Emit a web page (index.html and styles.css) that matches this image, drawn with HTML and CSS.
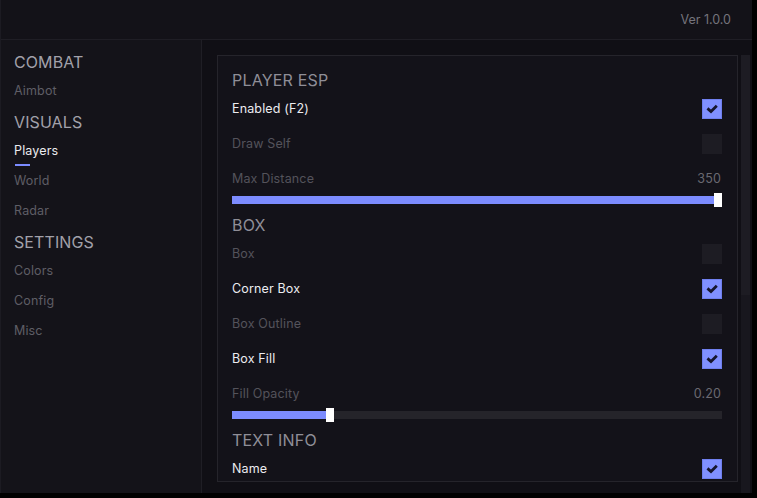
FILE: index.html
```html
<!DOCTYPE html>
<html>
<head>
<meta charset="utf-8">
<link rel="stylesheet" href="styles.css">
</head>
<body>
<div class="window">
  <header class="header"><span class="version">Ver 1.0.0</span></header>
  <div class="main">
    <nav class="sidebar">
      <div class="nav-head first">COMBAT</div>
      <div class="nav-item">Aimbot</div>
      <div class="nav-head">VISUALS</div>
      <div class="nav-item active">Players</div>
      <div class="nav-item">World</div>
      <div class="nav-item">Radar</div>
      <div class="nav-head">SETTINGS</div>
      <div class="nav-item">Colors</div>
      <div class="nav-item">Config</div>
      <div class="nav-item">Misc</div>
    </nav>
    <section class="content">
      <div class="card">
        <div class="sec-head">PLAYER ESP</div>
        <div class="row on"><span>Enabled (F2)</span><span class="cb checked"><svg viewBox="0 0 20 20" width="20" height="20"><path d="M6.5 10.3 L9 12.6 L13.8 7.8" fill="none" stroke="#16162e" stroke-width="2.8" stroke-linecap="square"/></svg></span></div>
        <div class="row"><span>Draw Self</span><span class="cb"></span></div>
        <div class="slider">
          <div class="slider-label"><span>Max Distance</span><span class="val">350</span></div>
          <div class="track"><div class="fill" style="width:100%"></div><div class="thumb" style="left:calc(100% - 8px)"></div></div>
        </div>
        <div class="sec-head">BOX</div>
        <div class="row"><span>Box</span><span class="cb"></span></div>
        <div class="row on"><span>Corner Box</span><span class="cb checked"><svg viewBox="0 0 20 20" width="20" height="20"><path d="M6.5 10.3 L9 12.6 L13.8 7.8" fill="none" stroke="#16162e" stroke-width="2.8" stroke-linecap="square"/></svg></span></div>
        <div class="row"><span>Box Outline</span><span class="cb"></span></div>
        <div class="row on"><span>Box Fill</span><span class="cb checked"><svg viewBox="0 0 20 20" width="20" height="20"><path d="M6.5 10.3 L9 12.6 L13.8 7.8" fill="none" stroke="#16162e" stroke-width="2.8" stroke-linecap="square"/></svg></span></div>
        <div class="slider">
          <div class="slider-label"><span>Fill Opacity</span><span class="val">0.20</span></div>
          <div class="track"><div class="fill" style="width:20%"></div><div class="thumb" style="left:calc(20% - 4px)"></div></div>
        </div>
        <div class="sec-head">TEXT INFO</div>
        <div class="row on"><span>Name</span><span class="cb checked"><svg viewBox="0 0 20 20" width="20" height="20"><path d="M6.5 10.3 L9 12.6 L13.8 7.8" fill="none" stroke="#16162e" stroke-width="2.8" stroke-linecap="square"/></svg></span></div>
      </div>
      <div class="scrollbar"><div class="thumb-sb"></div></div>
    </section>
  </div>
</div>
</body>
</html>
```
FILE: styles.css
```css
* { box-sizing: border-box; }
html, body { margin: 0; padding: 0; }
body {
  background: #000;
  width: 757px;
  height: 498px;
  overflow: hidden;
  font-family: Inter, "Noto Sans", sans-serif;
}
.window {
  width: 752px;
  height: 493px;
  background: #131218;
  border-left: 1px solid #1c1b22;
  display: flex;
  flex-direction: column;
  overflow: hidden;
}
.header {
  height: 40px;
  flex: none;
  border-bottom: 1px solid #1f1e25;
  display: flex;
  align-items: center;
  justify-content: flex-end;
  padding-right: 21px;
}
.version {
  color: #75747c;
  font-size: 12.5px;
}
.main {
  flex: 1;
  display: flex;
  min-height: 0;
}
.sidebar {
  width: 201px;
  flex: none;
  background: #141319;
  border-right: 1px solid #1f1e25;
  padding: 0 0 0 13px;
  display: flex;
  flex-direction: column;
}
.nav-head {
  font-size: 16px;
  line-height: 18px;
  height: 20px;
  color: #a2a1aa;
  margin-top: 7px;
  margin-bottom: 3px;
  letter-spacing: 0.1px;
}
.nav-head.first { margin-top: 13px; }
.nav-item {
  font-size: 12.5px;
  line-height: 30px;
  height: 30px;
  color: #5f5e66;
  position: relative;
  align-self: flex-start;
  letter-spacing: 0.15px;
}
.nav-item.active { color: #ebebef; }
.nav-item.active::after {
  content: "";
  position: absolute;
  left: 1px;
  bottom: 0;
  width: 15px;
  height: 2px;
  background: #7b8bff;
}
.content {
  flex: 1;
  background: #100f15;
  display: flex;
  padding: 15px 2px 11px 15px;
  gap: 3px;
  min-height: 0;
}
.card {
  flex: 1;
  background: #131219;
  border: 1px solid #25242b;
  padding: 15px 15px 0 14px;
  overflow: hidden;
  display: flex;
  flex-direction: column;
}
.sec-head {
  font-size: 16px;
  line-height: 18px;
  height: 20px;
  color: #8f8e97;
  flex: none;
  letter-spacing: 0.2px;
}
.row {
  height: 35px;
  flex: none;
  display: flex;
  align-items: center;
  justify-content: space-between;
  font-size: 12.5px;
  color: #54535b;
  letter-spacing: 0.15px;
}
.row.on { color: #ececf0; }
.cb {
  width: 20px;
  height: 20px;
  background: #1d1c23;
  display: block;
  flex: none;
}
.cb svg { display: block; }
.cb.checked {
  background: #8090ff;
  box-shadow: inset 0 0 0 1px #6f7fee;
}
.slider { flex: none; margin-bottom: 12px; }
.slider-label {
  height: 35px;
  display: flex;
  align-items: center;
  justify-content: space-between;
  font-size: 12.5px;
  color: #54535b;
  letter-spacing: 0.15px;
}
.slider-label .val { color: #6a6971; padding-right: 1px; }
.track {
  height: 8px;
  background: #25242a;
  position: relative;
}
.fill {
  height: 100%;
  background: #7c8cff;
}
.thumb {
  position: absolute;
  top: -3px;
  width: 8px;
  height: 14px;
  background: #fff;
}
.scrollbar {
  width: 9px;
  flex: none;
  background: #18171e;
  margin-bottom: -11px;
}
.thumb-sb {
  height: 240px;
  background: #1d1c23;
}
```
